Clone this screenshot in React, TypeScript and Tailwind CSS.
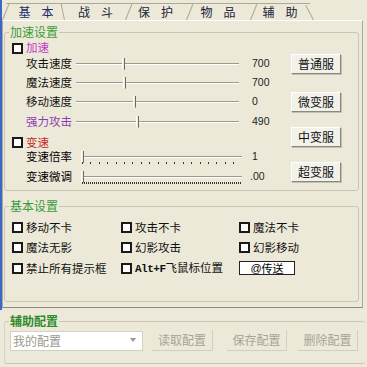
import React from 'react'

const cjk = "font-['SimSun','Noto_Sans_CJK_SC','Liberation_Sans',sans-serif]"

function Check({ label, color = 'text-[#111]' }: { label: React.ReactNode; color?: string }) {
  return (
    <div className="flex items-center">
      <span className="w-[11px] h-[11px] border-2 border-[#1a1a1a] bg-white shrink-0" />
      <span className={`ml-[3px] text-[11.5px] leading-none ${color}`}>{label}</span>
    </div>
  )
}

function Btn({ children, className = '' }: { children: React.ReactNode; className?: string }) {
  return (
    <div
      className={`flex items-center justify-center w-[50px] h-[20px] bg-[#f2f1ea] border border-t-white border-l-white border-r-[#8a887c] border-b-[#8a887c] shadow-[1px_1px_0_#c2c0b2] text-[12px] text-[#111] ${className}`}
    >
      {children}
    </div>
  )
}

function Track({ w, thumb, ticks }: { w: string; thumb: string; ticks?: 'sparse' | 'dense' }) {
  return (
    <div className={`relative h-[14px] ${w}`}>
      <div className="absolute left-0 right-0 top-[6px] h-[2px] border-t border-t-[#9d9a8c] border-b border-b-white" />
      <div className={`absolute top-[1px] ${thumb} w-[3px] h-[12px] bg-[#ece9d8] border-l border-l-white border-r border-r-[#6e6c62] rounded-b-[2px]`} />
      {ticks === 'sparse' && (
        <div className="absolute left-[1px] right-0 top-[12px] h-[2px] bg-[repeating-linear-gradient(90deg,#333_0_1px,transparent_1px_8.4px)]" />
      )}
      {ticks === 'dense' && (
        <div className="absolute left-[1px] right-0 top-[12px] h-[2px] bg-[repeating-linear-gradient(90deg,#333_0_1px,transparent_1px_2px)]" />
      )}
    </div>
  )
}

function SliderRow({ label, value, thumb, color = 'text-[#111]' }: { label: string; value: string; thumb: string; color?: string }) {
  return (
    <div className="flex items-center h-[19.3px] pl-[14px]">
      <span className={`w-[50px] text-[11.5px] leading-none ${color}`}>{label}</span>
      <Track w="w-[163px]" thumb={thumb} />
      <span className="ml-[13px] font-['Liberation_Sans',sans-serif] text-[10.5px] text-[#222]">{value}</span>
    </div>
  )
}

function Group({ title, titleColor, className, children }: { title: string; titleColor: string; className: string; children: React.ReactNode }) {
  return (
    <div className={`relative border border-[#c9c6b6] rounded-[3px] ${className}`}>
      <span className={`absolute -top-[7px] left-[4px] px-[1px] bg-[#ece9d8] text-[12px] leading-none ${titleColor}`}>{title}</span>
      {children}
    </div>
  )
}

const tabs = [
  { a: '基', b: '本', w: 'w-[60px]' },
  { a: '战', b: '斗', w: 'w-[59px]' },
  { a: '保', b: '护', w: 'w-[61px]' },
  { a: '物', b: '品', w: 'w-[64px]' },
  { a: '辅', b: '助', w: 'w-[60px]' },
]

export default function App() {
  return (
    <div className={`w-[367px] h-[367px] overflow-hidden bg-[#ece9d8] ${cjk}`}>
      <div className="flex flex-col h-[310px] border-l-[2px] border-[#3b67c9]">
        {/* tabs */}
        <div className="flex h-[17px] mt-[3px] ml-[4px]">
          {tabs.map((t, i) => (
            <div
              key={i}
              className={`relative flex items-center justify-center gap-[11px] ${t.w} h-full border-t border-[#aca899] text-[12px] leading-none ${
                i === 0 ? 'z-10 -mb-px h-[18px] bg-[#ece9d8] text-[#1c2c6c]' : 'text-[#1a1f3a]'
              }`}
            >
              <span>{t.a}</span>
              <span>{t.b}</span>
              {i === 0 && (
                <span className="absolute -left-[4px] bottom-0 w-px h-[18px] bg-[#aca899] rotate-[22deg] origin-bottom" />
              )}
              {i === 0 ? (
                <span className="absolute right-[1px] bottom-0 w-px h-[17px] bg-[#aca899] -rotate-[12deg] origin-bottom" />
              ) : i === 4 ? (
                <span className="absolute -right-[4px] bottom-0 w-px h-[17px] bg-[#aca899] -rotate-[28deg] origin-bottom" />
              ) : (
                <span className="absolute -right-[1px] bottom-0 w-px h-[17px] bg-[#aca899] rotate-[22deg] origin-bottom" />
              )}
            </div>
          ))}
        </div>

        {/* panel */}
        <div className="w-[361px] h-[288px] border border-t-white border-l-[#aca899] border-r-[#aca899] border-b-[#8e8c80] pt-[11px] pl-[1px] pr-[3px]">
          <Group title="加速设置" titleColor="text-[#3a9d3a]" className="h-[159px]">
            <div className="flex pl-[7px]">
              <div className="w-[279px] pt-[9px]">
                <div className="h-[12px] flex items-center">
                  <Check label="加速" color="text-[#c437c4]" />
                </div>
                <SliderRow label="攻击速度" value="700" thumb="left-[46px]" />
                <SliderRow label="魔法速度" value="700" thumb="left-[47px]" />
                <SliderRow label="移动速度" value="0" thumb="left-[57px]" />
                <SliderRow label="强力攻击" value="490" thumb="left-[60px]" color="text-[#8e3cb0]" />
                <div className="h-[13px] mt-[5px] flex items-center">
                  <Check label="变速" color="text-[#c42a2a]" />
                </div>
                <div className="flex items-center h-[14px] mt-[1px] pl-[14px]">
                  <span className="w-[55px] text-[11.5px] leading-none">变速倍率</span>
                  <Track w="w-[161px]" thumb="left-[0px]" ticks="sparse" />
                  <span className="ml-[10px] font-['Liberation_Sans',sans-serif] text-[10.5px] text-[#222]">1</span>
                </div>
                <div className="flex items-center h-[14px] mt-[6px] pl-[14px]">
                  <span className="w-[55px] text-[11.5px] leading-none">变速微调</span>
                  <Track w="w-[161px]" thumb="left-[0px]" ticks="dense" />
                  <span className="ml-[8px] font-['Liberation_Sans',sans-serif] text-[10.5px] text-[#222]">.00</span>
                </div>
              </div>
              <div className="flex flex-col">
                <Btn className="mt-[21px]">普通服</Btn>
                <Btn className="mt-[18px]">微变服</Btn>
                <Btn className="mt-[15px]">中变服</Btn>
                <Btn className="mt-[15px]">超变服</Btn>
              </div>
            </div>
          </Group>

          <Group title="基本设置" titleColor="text-[#3a9a3a]" className="mt-[15px] h-[96px]">
            <div className="grid grid-cols-[109px_118px_1fr] auto-rows-[20.5px] items-center pl-[7px] pt-[10px]">
              <Check label="移动不卡" />
              <Check label="攻击不卡" />
              <Check label="魔法不卡" />
              <Check label="魔法无影" />
              <Check label="幻影攻击" />
              <Check label="幻影移动" />
              <Check label="禁止所有提示框" />
              <Check
                label={
                  <>
                    <span className="font-['Liberation_Mono',monospace] text-[11px] font-bold tracking-[-0.5px]">Alt+F</span>
                    飞鼠标位置
                  </>
                }
              />
              <div className="w-[56px] h-[14px] bg-white border border-[#222] flex items-center justify-center text-[11px] leading-none">
                <span className="font-['Liberation_Sans',sans-serif]">@</span>传送
              </div>
            </div>
          </Group>
        </div>
      </div>

      {/* bottom group */}
      <Group title="辅助配置" titleColor="text-[#2c8a2c] font-bold" className="mt-[11px] ml-[4px] mr-[2px] h-[43px] border-l-[#d6d3c4] border-r-0">
        <div className="flex items-center pt-[8px] pl-[5px]">
          <div className="relative w-[133px] h-[20px] bg-white border border-[#d3d0c4] flex items-center pl-[2px] text-[12px] text-[#9a9a90]">
            我的配置
            <span className="absolute right-[6px] top-[6px] w-0 h-0 border-l-[3px] border-r-[3px] border-t-[4px] border-l-transparent border-r-transparent border-t-[#9a9a90]" />
          </div>
          <div className="ml-[9px] w-[61px] h-[21px] flex items-center justify-center border-r border-b border-[#d2cfc2] text-[12px] text-[#a6a49a]">读取配置</div>
          <div className="ml-[14px] w-[60px] h-[21px] flex items-center justify-center border-r border-b border-[#d2cfc2] text-[12px] text-[#a6a49a]">保存配置</div>
          <div className="ml-[11px] w-[60px] h-[21px] flex items-center justify-center border-r border-b border-[#d2cfc2] text-[12px] text-[#a6a49a]">删除配置</div>
        </div>
      </Group>
    </div>
  )
}
